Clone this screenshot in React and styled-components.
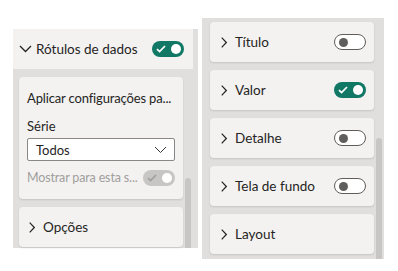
import React from "react";
import styled, { createGlobalStyle } from "styled-components";

const GlobalStyle = createGlobalStyle`
    body {
        margin: 0;
        background: #ffffff;
        font-family: "Segoe UI", Lato, "Noto Sans", sans-serif;
        color: #252423;
    }
`;

const Page = styled.div`
    display: flex;
    align-items: flex-start;
    width: 398px;
    height: 271px;
`;

const Pane = styled.div`
    display: flex;
    flex-direction: column;
    background: #e1dfdd;
    width: ${(p) => p.width}px;
    height: ${(p) => p.height}px;
    margin-top: ${(p) => p.top}px;
    margin-left: ${(p) => p.left}px;
    box-sizing: border-box;
`;

const SectionHeader = styled.div`
    display: flex;
    align-items: center;
    height: 40px;
    margin-right: 5px;
    padding: 0 9px 0 6px;
    background: #f3f2f1;
    font-size: 13.5px;
`;

const Body = styled.div`
    flex: 1;
    display: flex;
    align-items: stretch;
    padding: ${(p) => p.pad};
`;

const Stack = styled.div`
    display: flex;
    flex-direction: column;
    gap: 8px;
    width: 164px;
`;

const Scroll = styled.div`
    width: 6px;
    margin-left: 2px;
    margin-top: ${(p) => p.offset}px;
    background: #c8c6c4;
    border-radius: 3px 3px 0 0;
`;

const Card = styled.div`
    background: #f3f2f1;
    border-radius: 4px;
    box-shadow: 0 1px 2px rgba(0, 0, 0, 0.12);
`;

const CardRow = styled(Card)`
    display: flex;
    align-items: center;
    height: 40px;
    padding: 0 8px 0 ${(p) => p.padLeft || 11}px;
    font-size: 13.5px;
`;

const Label = styled.span`
    flex: 1;
    margin-left: ${(p) => p.gap}px;
    white-space: nowrap;
`;

const SettingsCard = styled(Card)`
    display: flex;
    flex-direction: column;
    padding: 12px 8px;
    font-size: 13px;
`;

const Text = styled.div`
    line-height: 18px;
    white-space: nowrap;
    color: ${(p) => (p.muted ? "#a19f9d" : "#252423")};
    font-size: ${(p) => (p.muted ? "12.5px" : "inherit")};
    margin-top: ${(p) => p.top || 0}px;
    letter-spacing: ${(p) => (p.tight ? "-0.15px" : "0")};
    flex: ${(p) => (p.grow ? "1 1 auto" : "none")};
    min-width: 0;
`;

const Select = styled.div`
    display: flex;
    align-items: center;
    justify-content: space-between;
    height: 23px;
    margin-top: 3px;
    padding: 0 7px 0 8px;
    background: #ffffff;
    border: 1px solid #8a8886;
    box-sizing: border-box;
    border-radius: 2px;
`;

const ToggleRow = styled.div`
    display: flex;
    align-items: center;
    gap: 6px;
    margin-top: 8px;
`;

const Track = styled.div`
    display: flex;
    align-items: center;
    justify-content: space-between;
    flex: none;
    width: 32px;
    height: 16px;
    box-sizing: border-box;
    border-radius: 8px;
    padding: 0 3px 0 4px;
    background: ${(p) => (p.on ? "#117865" : p.disabled ? "#c8c6c4" : "#ffffff")};
    border: ${(p) => (p.on || p.disabled ? "none" : "1px solid #605e5c")};
`;

const Knob = styled.div`
    width: ${(p) => (p.off ? 9 : 10)}px;
    height: ${(p) => (p.off ? 9 : 10)}px;
    border-radius: 50%;
    background: ${(p) => (p.off ? "#605e5c" : "#ffffff")};
`;

const Chevron = ({ down, light }) =>
    down ? (
        <svg width="13" height="8" viewBox="0 0 13 8" fill="none">
            <path
                d="M1 1l5.5 5.5L12 1"
                stroke={light ? "#3b3a39" : "#252423"}
                strokeWidth={light ? 1 : 1.3}
            />
        </svg>
    ) : (
        <svg width="6" height="11" viewBox="0 0 6 11" fill="none">
            <path d="M0.7 0.7l4.6 4.8-4.6 4.8" stroke="#252423" strokeWidth="1.2" />
        </svg>
    );

const Toggle = ({ on, disabled }) => {
    if (on || disabled) {
        const c = on ? "#ffffff" : "#a19f9d";
        return (
            <Track on={on} disabled={disabled}>
                <svg width="10" height="8" viewBox="0 0 10 8" fill="none">
                    <path d="M1 4.2l2.6 2.4L9 1" stroke={c} strokeWidth="1.8" />
                </svg>
                <Knob />
            </Track>
        );
    }
    return (
        <Track>
            <Knob off />
        </Track>
    );
};

const items = [
    { label: "Título", toggle: "off" },
    { label: "Valor", toggle: "on" },
    { label: "Detalhe", toggle: "off" },
    { label: "Tela de fundo", toggle: "off" },
    { label: "Layout" },
];

const App = () => {
    return (
        <Page>
            <GlobalStyle />
            <Pane width={185} height={219} top={29} left={13}>
                <SectionHeader>
                    <Chevron down />
                    <Label gap={4}>Rótulos de dados</Label>
                    <Toggle on />
                </SectionHeader>
                <Body pad="8px 0 0 6px">
                    <Stack>
                        <SettingsCard>
                            <Text tight>Aplicar configurações pa...</Text>
                            <Text top={10}>Série</Text>
                            <Select>
                                <span>Todos</span>
                                <Chevron down light />
                            </Select>
                            <ToggleRow>
                                <Text muted grow tight>Mostrar para esta s...</Text>
                                <Toggle disabled />
                            </ToggleRow>
                        </SettingsCard>
                        <CardRow padLeft={10}>
                            <Chevron />
                            <Label gap={8}>Opções</Label>
                        </CardRow>
                    </Stack>
                    <Scroll offset={101} />
                </Body>
            </Pane>
            <Pane width={182} height={241} top={18} left={4}>
                <Body pad="4px 0 0 8px">
                    <Stack>
                        {items.map((it) => (
                            <CardRow key={it.label}>
                                <Chevron />
                                <Label gap={8}>{it.label}</Label>
                                {it.toggle && <Toggle on={it.toggle === "on"} />}
                            </CardRow>
                        ))}
                    </Stack>
                    <Scroll offset={116} />
                </Body>
            </Pane>
        </Page>
    );
};

export default App;
